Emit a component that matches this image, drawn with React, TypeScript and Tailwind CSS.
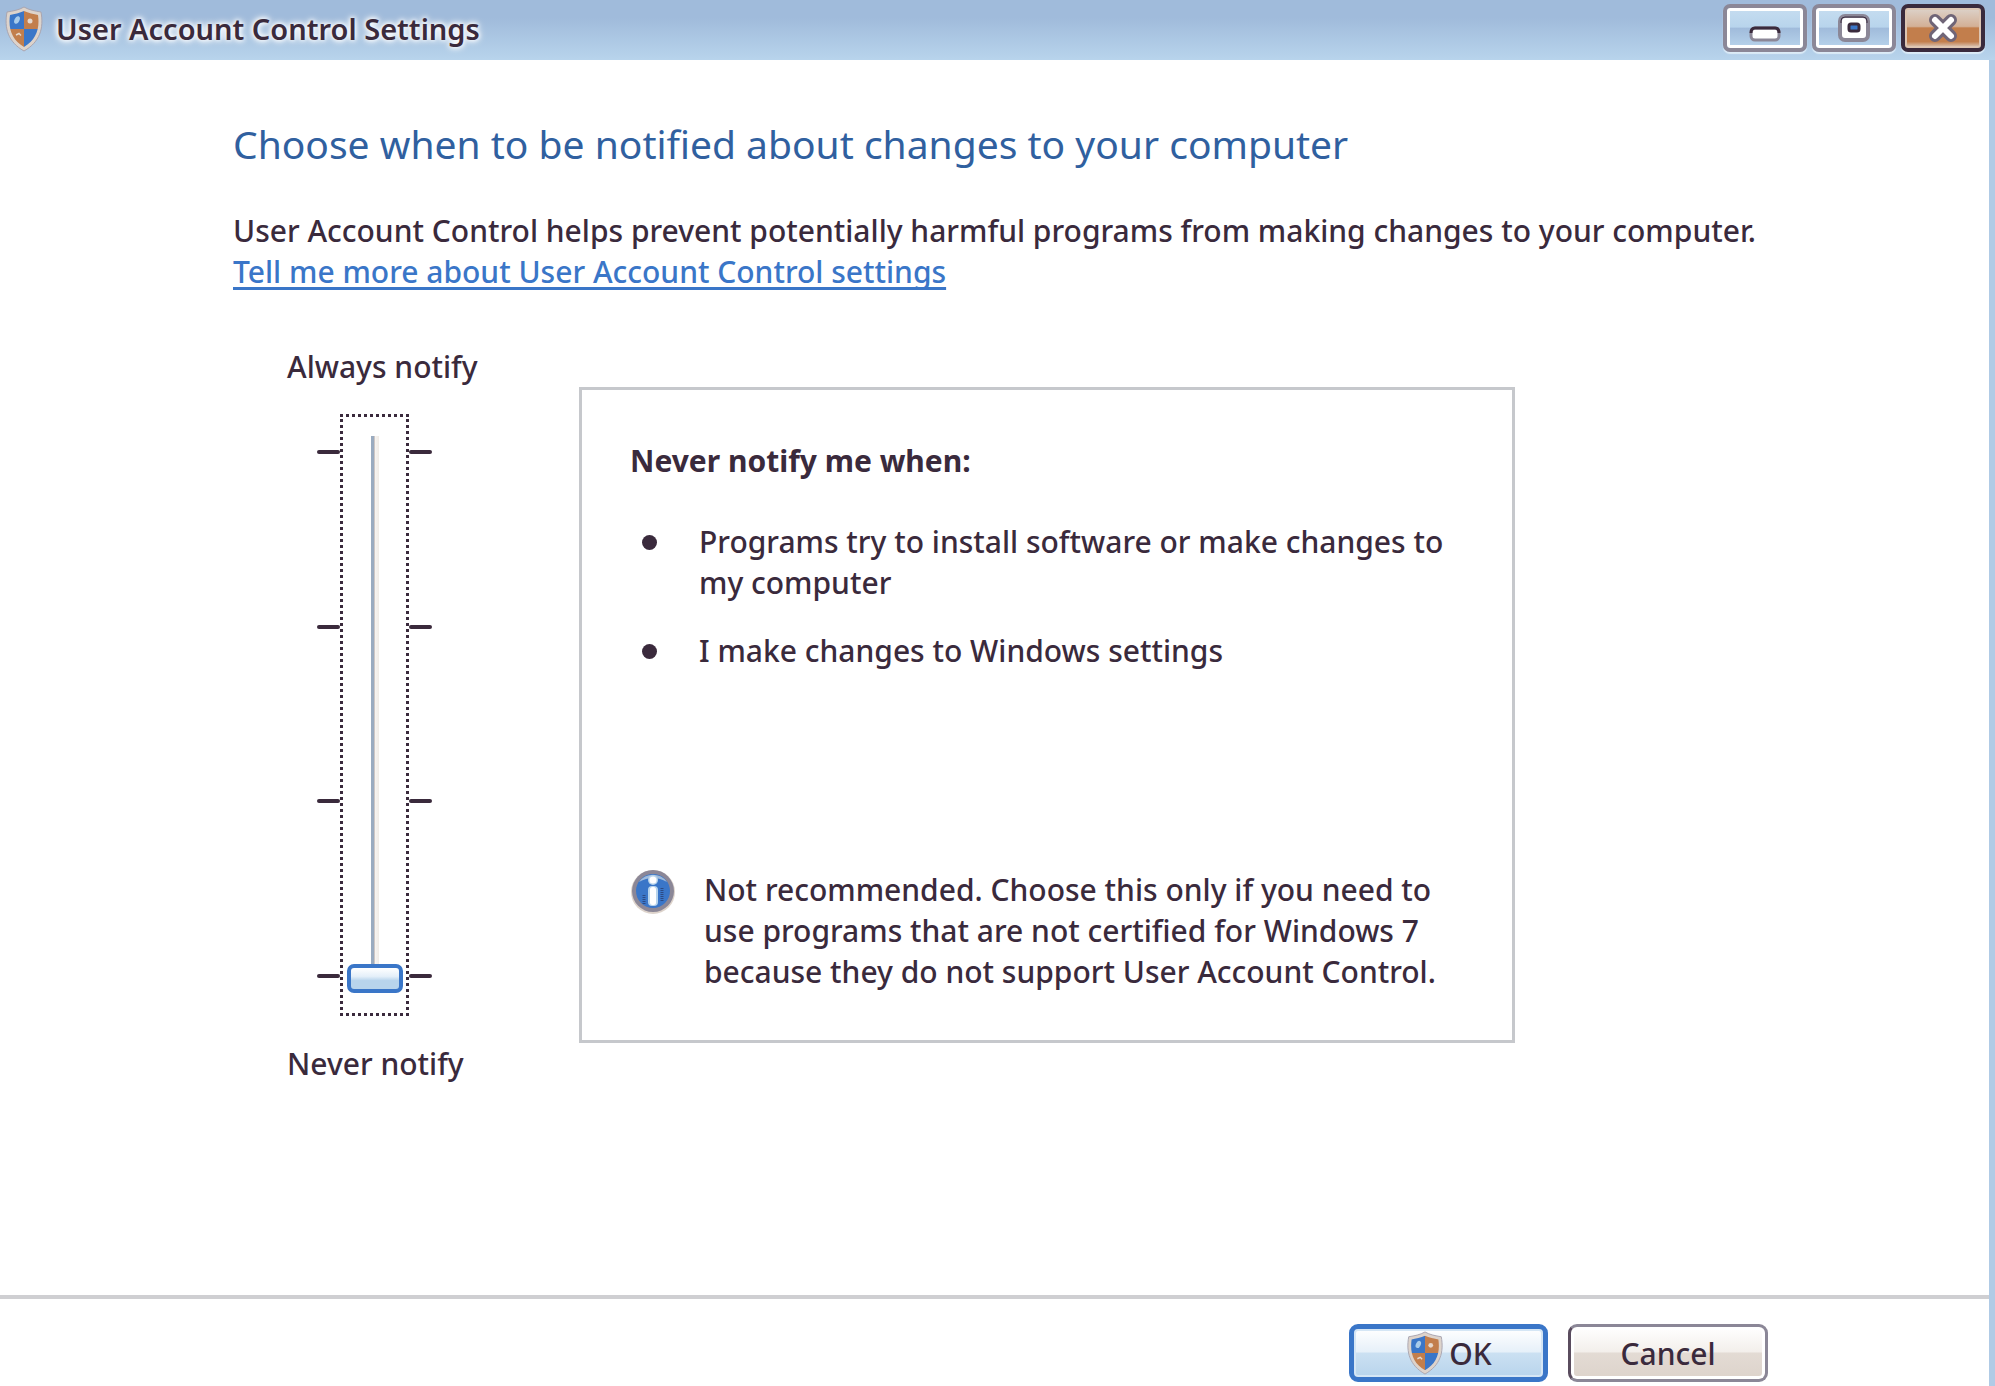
import { useId, useState } from "react";

function Shield({ className }: { className: string }) {
  const id = useId();
  const outline = "M20 1C25 4 31 5 37 6C40 22 36 36 20 45C4 36 0 22 3 6C9 5 15 4 20 1Z";
  return (
    <svg viewBox="0 0 40 46" className={className} aria-hidden="true">
      <defs>
        <clipPath id={id}>
          <path d="M20 5C24 7 30 8 34 9C36 23 32 34 20 41C8 34 4 23 6 9C10 8 16 7 20 5Z" />
        </clipPath>
      </defs>
      <path d={outline} fill="#ddd3cb" stroke="#a9a5b0" strokeWidth="1" />
      <g clipPath={`url(#${id})`}>
        <rect width="20" height="23" fill="#3a76c8" />
        <rect x="20" width="20" height="23" fill="#c27e4c" />
        <rect y="23" width="20" height="23" fill="#c27e4c" />
        <rect x="20" y="23" width="20" height="23" fill="#3a76c8" />
      </g>
      <ellipse cx="13" cy="14" rx="2.5" ry="4" fill="#a8cbea" transform="rotate(25 13 14)" />
      <ellipse cx="26" cy="15" rx="2.5" ry="2.5" fill="#e6d8cc" />
      <path d="M12 29l3-1.500 2 2" fill="none" stroke="#e6d8cc" strokeWidth="1.500" />
    </svg>
  );
}

function InfoIcon() {
  return (
    <svg viewBox="0 0 46 46" className="size-[46px] shrink-0" aria-hidden="true">
      <circle cx="23" cy="23" r="22" fill="#ddd3cb" />
      <circle cx="23" cy="22" r="21" fill="#8b8797" />
      <circle cx="23" cy="22" r="17" fill="#3a76c8" />
      <path d="M9 13A17 17 0 0 1 37 13Q23 5 9 13Z" fill="#a0bbdb" />
      <circle cx="23" cy="11" r="5" fill="#b8d4ec" />
      <circle cx="23" cy="11" r="3.500" fill="#fff" />
      <rect x="18" y="17" width="10" height="20" rx="4" fill="#b8d4ec" />
      <rect x="20" y="18" width="6" height="18" rx="2.500" fill="#fff" />
      <path d="M14 26v10M32 19v14" stroke="#2c4a84" strokeWidth="3" strokeDasharray="1 1" />
    </svg>
  );
}

const captionBlue =
  "flex h-12 w-[84px] items-center justify-center rounded-[7px] border-4 border-[#8b8797] bg-[linear-gradient(#c6ddf0_0%,#b8d4ec_48%,#a0bbdb_50%,#b8d4ec_100%)] shadow-[inset_0_0_0_3px_#fff,0_2px_1px_#dcebf7]";

function TitleBar() {
  return (
    <header className="flex h-[60px] shrink-0 items-start bg-[linear-gradient(#a0bbdb_0%,#a0bbdb_30%,#b8d4ec_100%)] pl-1 pr-[10px]">
      <div className="flex h-[54px] items-center gap-3 pt-[3px]">
        <Shield className="h-[46px] w-10" />
        <h1 className="text-[29px] font-semibold leading-10 [text-shadow:0_0_4px_#fff,0_0_6px_#fff,0_0_8px_#fff]">
          User Account Control Settings
        </h1>
      </div>
      <div className="ml-auto flex gap-[5px] pt-1">
        <button type="button" aria-label="Minimize" className={captionBlue}>
          <svg viewBox="0 0 32 16" className="mt-3 h-4 w-8" aria-hidden="true">
            <rect x="2" y="2" width="28" height="12" rx="4" fill="#fff" stroke="#8b8797" strokeWidth="3" />
            <path d="M2 7Q2 2 6 2H26Q30 2 30 7" fill="none" stroke="#3a2a3c" strokeWidth="3" />
          </svg>
        </button>
        <button type="button" aria-label="Maximize" className={captionBlue}>
          <svg viewBox="0 0 32 28" className="h-7 w-8" aria-hidden="true">
            <rect x="2" y="2" width="28" height="24" rx="5" fill="#fff" stroke="#8b8797" strokeWidth="4" />
            <path d="M3 9V7Q3 3 7 3H25Q29 3 29 7V9" fill="none" stroke="#3a2a3c" strokeWidth="1" />
            <rect x="11" y="10" width="10" height="7" rx="2" fill="#3a76c8" stroke="#3a2a3c" strokeWidth="3" />
          </svg>
        </button>
        <button
          type="button"
          aria-label="Close"
          className="flex h-12 w-[84px] items-center justify-center rounded-[7px] border-4 border-[#3a2a3c] bg-[linear-gradient(#ddd3cb_0%,#d3b096_46%,#c27e4c_50%,#c27e4c_84%,#ddd3cb_100%)] shadow-[inset_0_0_0_2px_#ddc5b2,0_2px_1px_#dcebf7]"
        >
          <svg viewBox="0 0 32 28" className="h-7 w-8" aria-hidden="true">
            <path d="M8 6L24 22M24 6L8 22" stroke="#6f6577" strokeWidth="12" strokeLinecap="round" />
            <path d="M8 6L24 22M24 6L8 22" stroke="#fff" strokeWidth="6" strokeLinecap="round" />
          </svg>
        </button>
      </div>
    </header>
  );
}

function Ticks() {
  return (
    <div className="flex w-[23px] flex-col justify-between pb-[38px] pt-9" aria-hidden="true">
      {[3, 2, 1, 0].map((n) => (
        <span key={n} className="h-1 rounded-full bg-[#3a2a3c]" />
      ))}
    </div>
  );
}

function NotifySlider() {
  const [level, setLevel] = useState(0);
  return (
    <div className="flex w-[292px] shrink-0 flex-col pl-[54px]">
      <label htmlFor="level">Always notify</label>
      <div className="my-[27px] ml-[30px] flex">
        <Ticks />
        <div className="flex w-[69px] justify-center border-[3px] border-dotted border-[#3a2a3c] pb-5 pt-[19px]">
          <input
            id="level"
            type="range"
            min={0}
            max={3}
            step={1}
            value={level}
            onChange={(e) => setLevel(Number(e.target.value))}
            className="h-[557px] w-14 appearance-none bg-[linear-gradient(90deg,#9aabc0_0px,#9aabc0_3px,#cdc6c4_3px,#cdc6c4_4px,#f7f4f1_4px,#f0ebe6_8px)] bg-[length:8px_100%] bg-center bg-no-repeat outline-none [direction:rtl] [writing-mode:vertical-lr] [&::-webkit-slider-thumb]:h-[29px] [&::-webkit-slider-thumb]:w-14 [&::-webkit-slider-thumb]:appearance-none [&::-webkit-slider-thumb]:rounded-[7px] [&::-webkit-slider-thumb]:border-4 [&::-webkit-slider-thumb]:border-[#3a76c8] [&::-webkit-slider-thumb]:bg-[linear-gradient(#ffffff_0%,#e4eff9_40%,#b8d4ec_60%,#b8d4ec_100%)]"
          />
        </div>
        <Ticks />
      </div>
      <span>Never notify</span>
    </div>
  );
}

export default function App() {
  return (
    <div className="flex min-h-screen flex-col bg-white font-['Noto_Sans','Open_Sans',sans-serif] text-[30px] font-medium leading-[41px] text-[#3a2a3c]">
      <TitleBar />
      <div className="flex flex-1 flex-col border-r-[6px] border-[#b0cbe6]">
        <main className="flex-1 px-[233px] pt-14">
          <h2 className="text-[39px] font-normal leading-[56px] text-[#30609f]">
            Choose when to be notified about changes to your computer
          </h2>
          <p className="-mr-20 mt-[38px]">
            User Account Control helps prevent potentially harmful programs from making changes to your computer.
          </p>
          <a
            href="#help"
            className="text-[#3a76c8] underline decoration-[3px] underline-offset-4 [text-decoration-skip-ink:none]"
          >
            Tell me more about User Account Control settings
          </a>
          <div className="mt-[54px] flex gap-[54px]">
            <NotifySlider />
            <section className="my-[41px] flex min-h-[656px] w-full max-w-[936px] flex-col border-[3px] border-[#c6c8cc] pb-12 pl-12 pr-14 pt-[50px]">
              <h3 className="font-bold">Never notify me when:</h3>
              <ul className="mt-10 flex flex-col gap-[27px] pl-3">
                {["Programs try to install software or make changes to my computer", "I make changes to Windows settings"].map(
                  (item) => (
                    <li key={item} className="flex gap-[42px]">
                      <span className="mt-[14px] size-[15px] shrink-0 rounded-full bg-[#3a2a3c]" />
                      {item}
                    </li>
                  ),
                )}
              </ul>
              <div className="mt-auto flex gap-7">
                <InfoIcon />
                <p>
                  Not recommended. Choose this only if you need to use programs that are not certified for Windows 7
                  because they do not support User Account Control.
                </p>
              </div>
            </section>
          </div>
        </main>
        <footer className="flex justify-end gap-5 border-t-4 border-[#cfcfd2] pb-1 pr-[221px] pt-[25px]">
          <button
            type="button"
            className="flex h-[58px] w-[199px] items-center justify-center gap-1 rounded-[9px] border-[5px] border-[#3a76c8] bg-[linear-gradient(#ffffff_0%,#e6f0f9_48%,#cbe0f2_50%,#b8d4ec_100%)] shadow-[inset_0_0_0_2px_#d5e6f5]"
          >
            <Shield className="h-11 w-10" />
            OK
          </button>
          <button
            type="button"
            className="h-[58px] w-[200px] rounded-[9px] border-[3px] border-[#8b8797] border-l-[#5a4c5e] bg-[linear-gradient(#ffffff_0%,#f3efeb_48%,#e3dbd4_50%,#ddd3cb_100%)] shadow-[inset_0_0_0_3px_#fff]"
          >
            Cancel
          </button>
        </footer>
      </div>
    </div>
  );
}
